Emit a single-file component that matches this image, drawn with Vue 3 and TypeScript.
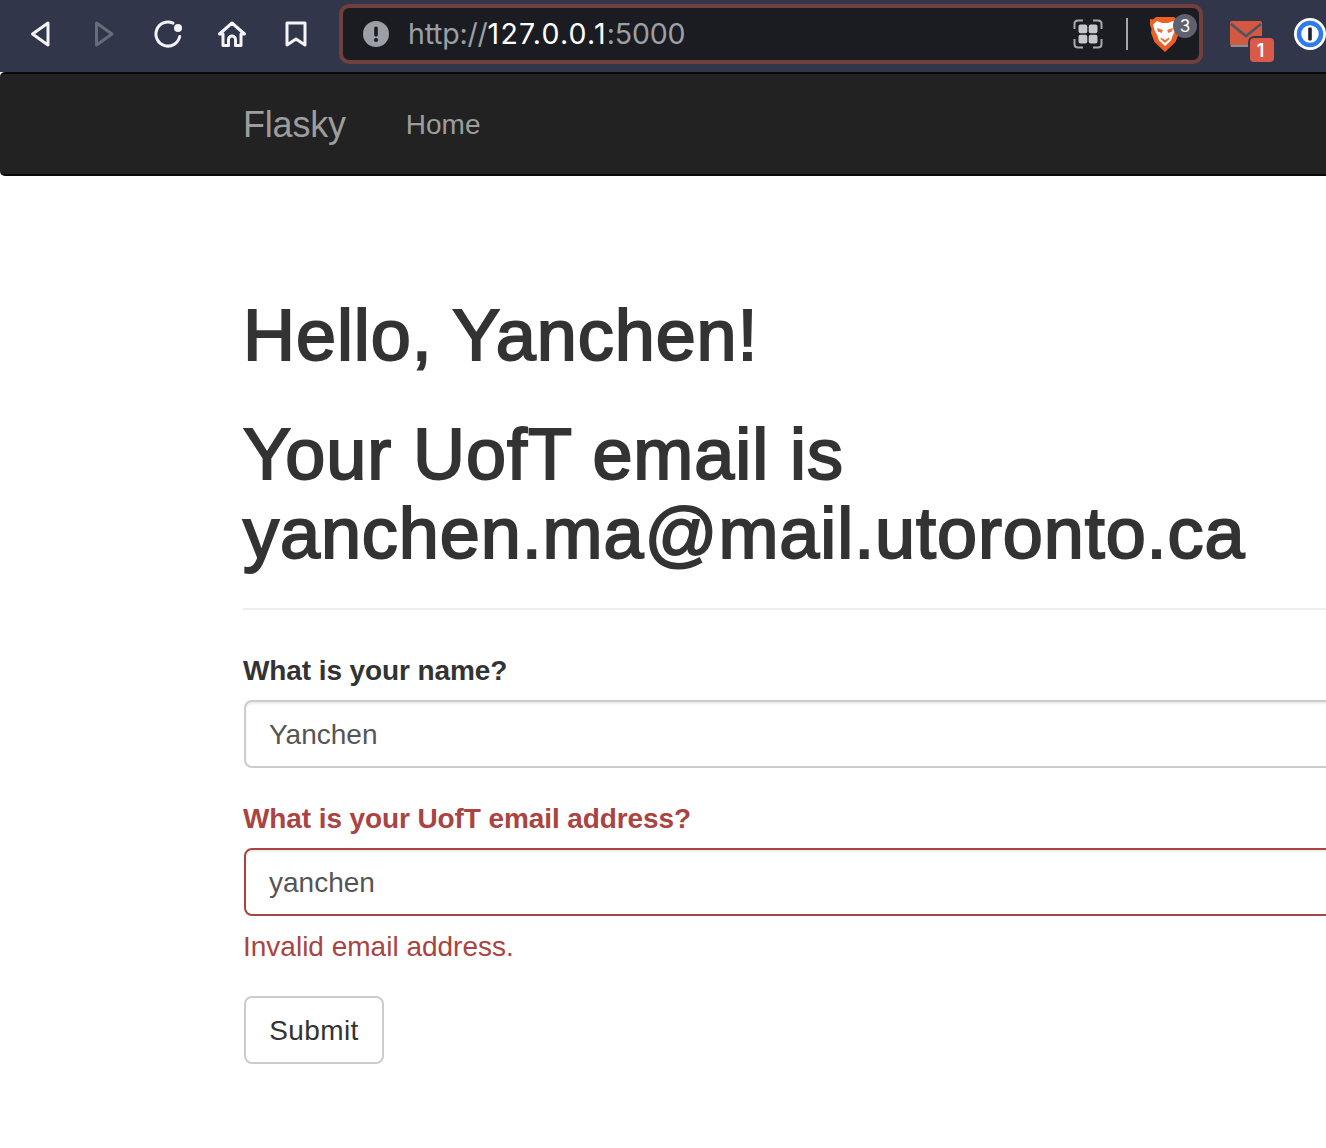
<script setup lang="ts">
import { ref } from 'vue'

const name = ref<string>('Yanchen')
const email = ref<string>('yanchen')
</script>

<template>
  <div class="page">
    <header class="toolbar">
      <button class="tool" aria-label="Back">
        <svg viewBox="0 0 32 32"><path d="M24 5 8.500 16 24 27Z" /></svg>
      </button>
      <button class="tool tool-off" aria-label="Forward">
        <svg viewBox="0 0 32 32"><path d="M8.500 5 24 16 8.500 27Z" /></svg>
      </button>
      <button class="tool" aria-label="Reload">
        <svg viewBox="0 0 32 32">
          <path d="M21 5.200A12 12 0 1 0 27.700 18.500" />
          <circle class="solid" cx="26" cy="10" r="4" />
        </svg>
      </button>
      <button class="tool" aria-label="Home">
        <svg viewBox="0 0 32 32">
          <path d="M3.500 16 16 5 28.500 16H25V27.500H19.500V21.500A3.500 3.500 0 0 0 12.500 21.500V27.500H7V16Z" />
        </svg>
      </button>
      <button class="tool" aria-label="Bookmark">
        <svg viewBox="0 0 32 32"><path d="M7 5H25V27L16 21 7 27Z" /></svg>
      </button>

      <div class="address">
        <svg class="warn" viewBox="0 0 26 26">
          <circle cx="13" cy="13" r="13" fill="#9ba0a6" />
          <rect x="11.200" y="5.500" width="3.600" height="10" rx="1.600" fill="#1b1c22" />
          <circle cx="13" cy="19" r="2.100" fill="#1b1c22" />
        </svg>
        <span class="url"><span class="scheme">http://</span><span class="host">127.0.0.1</span><span class="port">:5000</span></span>
        <svg class="qr" viewBox="0 0 30 30">
          <path class="brackets" d="M1.500 10V5Q1.500 1.500 5 1.500H10M20 1.500H25Q28.500 1.500 28.500 5V10M28.500 20V25Q28.500 28.500 25 28.500H20M10 28.500H5Q1.500 28.500 1.500 25V20" />
          <rect x="5.500" y="5.500" width="8.800" height="8.800" rx="2" />
          <rect x="15.700" y="5.500" width="8.800" height="8.800" rx="2" />
          <rect x="5.500" y="15.700" width="8.800" height="8.800" rx="2" />
          <rect x="15.700" y="15.700" width="8.800" height="8.800" rx="2" />
        </svg>
        <span class="divider"></span>
        <span class="brave">
          <svg viewBox="0 0 30 36">
            <path fill="#ee5f25" d="M6 1H24L27 3.500 30 3 30 9 28.500 13 29 17 25.500 26 15 36 4.500 26 1 17 1.500 13 0 9 0 3 3 3.500Z" />
            <path fill="#fff" d="M7 5 12 7H18L23 5 27 8.500 25.500 14 22.500 20 21 24.500 15 30 9 24.500 7.500 20 4.500 14 3 8.500Z" />
            <path fill="#e8703a" d="M7 12 13 14 11.500 17 8 15.500ZM23 12 17 14 18.500 17 22 15.500Z" />
            <path fill="#e8703a" d="M11 21.500 15 24 19 21.500 19.500 23 15 27 10.500 23Z" />
          </svg>
          <span class="brave-count">3</span>
        </span>
      </div>

      <span class="mail">
        <svg viewBox="0 0 32 26">
          <rect width="32" height="25" rx="2" fill="#d2593f" />
          <path d="M1 3 16 15 31 3" fill="none" stroke="#4c5466" stroke-width="2.600" />
          <path d="M1 25H31" stroke="#8b8e98" stroke-width="2" />
        </svg>
        <span class="mail-count">1</span>
      </span>

      <svg class="onepass" viewBox="0 0 32 32">
        <circle cx="16" cy="16" r="16" fill="#fff" />
        <circle cx="16" cy="16" r="11" fill="none" stroke="#2f7bea" stroke-width="4.500" />
        <rect x="14.200" y="9.500" width="3.600" height="13" rx="1" fill="#1c2233" />
      </svg>
    </header>

    <nav class="navbar">
      <a class="brand" href="#">Flasky</a>
      <a class="nav-link" href="#">Home</a>
    </nav>

    <main class="main">
      <div class="page-header">
        <h1>Hello, Yanchen!</h1>
        <h1>Your UofT email is yanchen.ma@mail.utoronto.ca</h1>
      </div>

      <form class="form" @submit.prevent>
        <div class="group">
          <label for="name">What is your name?</label>
          <input id="name" v-model="name" type="text" />
        </div>
        <div class="group has-error">
          <label for="email">What is your UofT email address?</label>
          <input id="email" v-model="email" type="text" />
          <p class="help">Invalid email address.</p>
        </div>
        <button class="submit" type="submit">Submit</button>
      </form>
    </main>
  </div>
</template>

<style>
html,
body {
  margin: 0;
  background: #fff;
}
</style>

<style scoped>
.page {
  width: 1326px;
  height: 1148px;
  overflow: hidden;
  font-family: "Liberation Sans", Arial, sans-serif;
  font-size: 28px;
  line-height: 40px;
  color: #333;
  background: #fff;
}

.toolbar {
  display: flex;
  align-items: center;
  box-sizing: border-box;
  height: 72px;
  width: 1326px;
  padding: 0 0 4px 8px;
  background: #32364a;
}

.tool {
  display: flex;
  align-items: center;
  justify-content: center;
  flex: none;
  width: 64px;
  height: 64px;
  padding: 0;
  border: 0;
  background: none;
}

.tool svg {
  width: 32px;
  height: 32px;
  fill: none;
  stroke: #f3f4f6;
  stroke-width: 3;
  stroke-linejoin: round;
  stroke-linecap: round;
}

.tool .solid {
  fill: #f3f4f6;
  stroke: none;
}

.tool-off svg {
  stroke: #686b79;
}

.address {
  display: flex;
  align-items: center;
  flex: none;
  box-sizing: border-box;
  width: 864px;
  height: 60px;
  margin-left: 11px;
  padding-left: 20px;
  border: 4px solid #70403c;
  border-radius: 10px;
  background: #1b1c22;
}

.warn {
  flex: none;
  width: 26px;
  height: 26px;
}

.url {
  margin-left: 19px;
  font-family: Inter, "Liberation Sans", sans-serif;
  font-size: 28.500px;
  white-space: nowrap;
}

.scheme {
  letter-spacing: -0.200px;
  color: #9ba0a6;
}

.host {
  letter-spacing: 1.200px;
  color: #fff;
}

.port {
  letter-spacing: -0.200px;
  color: #9ba0a6;
}

.qr {
  flex: none;
  width: 30px;
  height: 30px;
  margin-left: auto;
  fill: #c6c7cb;
}

.brackets {
  fill: none;
  stroke: #a8a9ad;
  stroke-width: 2;
}

.divider {
  flex: none;
  width: 2px;
  height: 32px;
  margin-left: 23px;
  background: #a4a6ab;
}

.brave {
  position: relative;
  display: block;
  flex: none;
  width: 30px;
  height: 36px;
  margin: 0 19px 0 22px;
}

.brave svg {
  display: block;
  width: 30px;
  height: 36px;
}

.brave-count {
  position: absolute;
  top: -2px;
  left: 23px;
  width: 24px;
  height: 24px;
  border-radius: 50%;
  background: #5f616e;
  color: #fff;
  font-family: Inter, "Liberation Sans", sans-serif;
  font-size: 17px;
  line-height: 24px;
  text-align: center;
}

.mail {
  position: relative;
  display: block;
  flex: none;
  width: 32px;
  height: 26px;
  margin-left: 27px;
  margin-right: 32px;
}

.mail svg {
  display: block;
  width: 32px;
  height: 26px;
}

.mail-count {
  position: absolute;
  top: 17px;
  left: 20px;
  box-sizing: border-box;
  width: 24px;
  height: 24px;
  padding-right: 3px;
  border-radius: 4px;
  box-shadow: 0 0 0 2px #32364a;
  background: #da5a4a;
  color: #fff;
  font-family: Inter, "Liberation Sans", sans-serif;
  font-size: 18px;
  font-weight: 600;
  line-height: 26px;
  text-align: center;
}

.onepass {
  flex: none;
  width: 32px;
  height: 32px;
}

.navbar {
  display: flex;
  align-items: center;
  box-sizing: border-box;
  width: 1400px;
  height: 104px;
  padding: 2px 0 0 243px;
  border: 2px solid #080808;
  border-width: 2px 0;
  border-radius: 5px;
  background: #222;
}

.brand {
  font-size: 36px;
  letter-spacing: -0.200px;
  color: #9d9d9d;
  text-decoration: none;
}

.nav-link {
  margin-left: 60px;
  color: #9d9d9d;
  text-decoration: none;
}

.main {
  padding: 120px 0 0 243px;
}

.page-header {
  width: 1200px;
  padding-bottom: 14px;
  border-bottom: 2px solid #eee;
}

h1 {
  max-width: 1040px;
  margin: 0 0 40px;
  font-size: 72px;
  font-weight: 500;
  line-height: 79.200px;
  letter-spacing: 0.920px;
  -webkit-text-stroke: 2px #333;
  color: #333;
}

h1:last-child {
  margin-bottom: 20px;
}

.form {
  width: 1500px;
  margin-top: 40px;
}

.group {
  margin-bottom: 30px;
}

label {
  display: block;
  margin-bottom: 8px;
  font-weight: 700;
  line-height: 42px;
  letter-spacing: -0.100px;
}

input {
  display: block;
  box-sizing: border-box;
  width: 100%;
  height: 68px;
  margin-left: 1px;
  padding: 2px 23px 0;
  border: 2px solid #ccc;
  border-radius: 8px;
  outline: none;
  box-shadow: inset 0 2px 2px rgba(0, 0, 0, 0.075);
  font: inherit;
  color: #555;
  background: #fff;
}

.has-error label,
.help {
  color: #a94442;
}

.has-error input {
  border-color: #a94442;
}

.help {
  margin: 11px 0 -1px;
}

.submit {
  display: block;
  box-sizing: border-box;
  width: 140px;
  height: 68px;
  margin-left: 1px;
  padding: 2px 0 0;
  border: 2px solid #ccc;
  border-radius: 8px;
  background: #fff;
  font: inherit;
  letter-spacing: 0.400px;
  color: #333;
}
</style>
